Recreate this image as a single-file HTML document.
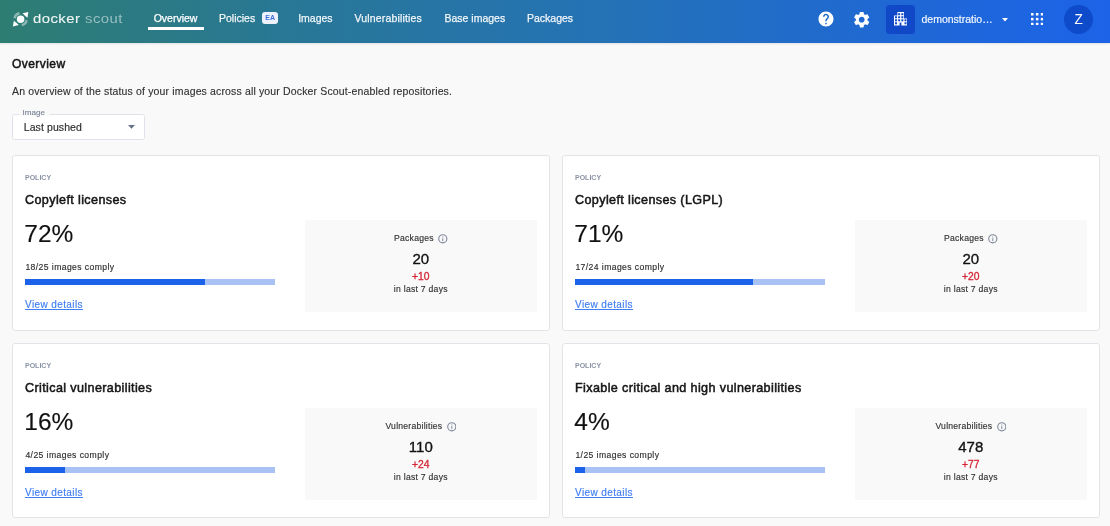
<!DOCTYPE html>
<html><head><meta charset="utf-8">
<style>
*{box-sizing:border-box;margin:0;padding:0}
html,body{width:1110px;height:526px;overflow:hidden;background:#f9f9f9;font-family:"Liberation Sans",sans-serif}
.a{position:absolute;line-height:1;white-space:nowrap}
#hdr{position:absolute;left:0;top:0;width:1110px;height:43px;background:linear-gradient(90deg,#2e7d72 0%,#287797 27%,#2572b5 54%,#1f68d5 81%,#1c63e8 100%);box-shadow:0 1px 2px rgba(0,0,0,.1)}
.nav{color:rgba(255,255,255,.9);font-size:10.5px;top:12.5px;-webkit-text-stroke:.25px rgba(255,255,255,.9)}
.card{position:absolute;width:537.5px;height:174.5px;background:#fff;border:1px solid #e3e4e9;border-radius:3px}
.card .pol{left:12px;top:17.9px;font-size:7px;font-weight:700;color:#8a93a6}
.card .ttl{left:12px;top:37.5px;font-size:12.6px;color:#151515;letter-spacing:.37px;-webkit-text-stroke:.5px #151515}
.card .pct{left:11.3px;top:65.4px;font-size:24.5px;color:#111;-webkit-text-stroke:.15px #111}
.card .cmp{left:12.4px;top:106.5px;font-size:8.6px;color:#2e2e2e;letter-spacing:.42px;-webkit-text-stroke:.15px #2e2e2e}
.card .bar{position:absolute;left:12px;top:122.5px;width:250px;height:6px;background:#a8c2f6}
.card .bar i{position:absolute;left:0;top:0;height:6px;background:#1c61ea}
.card .lnk{left:12px;top:143.5px;font-size:10px;color:#3f7ff3;letter-spacing:.4px;text-decoration:underline;text-decoration-thickness:.8px;text-underline-offset:1px;-webkit-text-stroke:.15px #3f7ff3}
.card .pnl{position:absolute;left:292px;top:63.5px;width:231.6px;height:92px;background:#f9f9f9}
.pnl .a{width:100%;text-align:center}
.pnl .lbl{top:13.8px;font-size:8.6px;color:#333;letter-spacing:.25px;-webkit-text-stroke:.15px #333}
.pnl .num{top:31.3px;font-size:15px;color:#111;-webkit-text-stroke:.35px #111}
.pnl .dlt{top:52.3px;font-size:10.3px;color:#d52536;-webkit-text-stroke:.3px #d52536}
.pnl .lst{top:65.5px;font-size:8.6px;color:#333;letter-spacing:.27px;-webkit-text-stroke:.15px #333}
</style></head><body><div style="position:absolute;left:0;top:0;width:1110px;height:526px;will-change:transform">
<div id="hdr">
  <svg class="a" style="left:13px;top:12px;overflow:visible" width="15" height="15" viewBox="0 0 15 15">
    <circle cx="7.6" cy="7.15" r="3.75" fill="#fff"/>
    <path d="M15.3 -0.1 L14.5 5.7 Q11.7 3.9 9.5 1.35 Z" fill="#fff"/>
    <path d="M-0.1 14.5 L0.8 8.7 Q3.6 10.5 5.7 13.0 Z" fill="#fff"/>
    <path d="M0.4 6.0 A7.3 7.3 0 0 1 6.2 -0.05 L6.7 2.4 A4.85 4.85 0 0 0 2.9 6.4Z" fill="rgba(255,255,255,.45)"/>
    <path d="M14.8 8.3 A7.3 7.3 0 0 1 9.0 14.35 L8.5 11.9 A4.85 4.85 0 0 0 12.3 7.9Z" fill="rgba(255,255,255,.45)"/>
  </svg>
  <span class="a" style="left:33px;top:12.2px;font-size:13.3px;color:#f2f7f5;letter-spacing:.4px;transform:scaleX(1.12);transform-origin:0 0;-webkit-text-stroke:.1px #f2f7f5">docker</span>
  <span class="a" style="left:84.5px;top:12.2px;font-size:13.3px;color:rgba(255,255,255,.5);letter-spacing:.4px;transform:scaleX(1.12);transform-origin:0 0">scout</span>

  <span class="a nav" style="left:153.7px;color:#fff;-webkit-text-stroke:.25px #fff">Overview</span>
  <div class="a" style="left:148px;top:27px;width:56px;height:3px;background:#fff"></div>
  <span class="a nav" style="left:219px">Policies</span>
  <span class="a" style="left:262.2px;top:11.9px;width:16px;height:11.8px;border-radius:3px;background:#edf2fc;color:#3d6fe0;font-size:7px;font-weight:700;text-align:center;line-height:11.4px">EA</span>
  <span class="a nav" style="left:298.2px">Images</span>
  <span class="a nav" style="left:354.5px;letter-spacing:.17px">Vulnerabilities</span>
  <span class="a nav" style="left:444.5px">Base images</span>
  <span class="a nav" style="left:527px">Packages</span>

  <!-- help -->
  <svg class="a" style="left:817.4px;top:10.3px" width="18" height="18" viewBox="0 0 24 24"><path fill="#fff" d="M12 2C6.48 2 2 6.48 2 12s4.48 10 10 10 10-4.48 10-10S17.52 2 12 2zm1 17h-2v-2h2v2zm2.07-7.75l-.9.92C13.45 12.9 13 13.5 13 15h-2v-.5c0-1.1.45-2.1 1.17-2.83l1.24-1.26c.37-.36.59-.86.59-1.41 0-1.1-.9-2-2-2s-2 .9-2 2H8c0-2.21 1.79-4 4-4s4 1.79 4 4c0 .88-.36 1.68-.93 2.25z"/></svg>
  <!-- gear -->
  <svg class="a" style="left:852.1px;top:9.7px" width="19.4" height="19.4" viewBox="0 0 24 24"><path fill="#fff" d="M19.14 12.94c.04-.3.06-.61.06-.94 0-.32-.02-.64-.07-.94l2.03-1.58c.18-.14.23-.41.12-.61l-1.92-3.32c-.12-.22-.37-.29-.59-.22l-2.39.96c-.5-.38-1.03-.7-1.62-.94l-.36-2.54c-.04-.24-.24-.41-.48-.41h-3.84c-.24 0-.43.17-.47.41l-.36 2.54c-.59.24-1.13.57-1.62.94l-2.39-.96c-.22-.08-.47 0-.59.22L2.74 8.87c-.12.21-.08.47.12.61l2.03 1.58c-.05.3-.09.63-.09.94s.02.64.07.94l-2.03 1.58c-.18.14-.23.41-.12.61l1.92 3.32c.12.22.37.29.59.22l2.39-.96c.5.38 1.03.7 1.62.94l.36 2.54c.05.24.24.41.48.41h3.84c.24 0 .44-.17.47-.41l.36-2.54c.59-.24 1.13-.56 1.62-.94l2.39.96c.22.08.47 0 .59-.22l1.92-3.32c.12-.22.07-.47-.12-.61l-2.01-1.58zM12 15.6c-1.98 0-3.6-1.62-3.6-3.6s1.62-3.6 3.6-3.6 3.6 1.62 3.6 3.6-1.62 3.6-3.6 3.6z"/></svg>
  <!-- org -->
  <div class="a" style="left:886px;top:4.6px;width:29.4px;height:29.2px;border-radius:3.5px;background:#1148c8"></div>
  <svg class="a" style="left:893.6px;top:12.4px" width="13.6" height="13.6" viewBox="0 0 13.6 13.6"><path fill="#fff" d="M3.4 0H10V6.4H13.6V13.6H7.4V10.4H5.6V13.6H0V3.4H3.4Z"/><g fill="#1148c8"><rect x="4.15" y="1.20" width="2.0" height="2.0"/><rect x="7.35" y="1.20" width="2.0" height="2.0"/><rect x="1.00" y="4.25" width="2.0" height="2.0"/><rect x="4.15" y="4.25" width="2.0" height="2.0"/><rect x="7.35" y="4.25" width="2.0" height="2.0"/><rect x="1.00" y="7.30" width="2.0" height="2.0"/><rect x="4.15" y="7.30" width="2.0" height="2.0"/><rect x="7.35" y="7.30" width="2.0" height="2.0"/><rect x="10.50" y="7.30" width="2.0" height="2.0"/><rect x="1.00" y="10.30" width="2.0" height="2.0"/><rect x="10.50" y="10.30" width="2.0" height="2.0"/></g></svg>
  <span class="a" style="left:921.5px;top:14px;font-size:10.5px;color:rgba(255,255,255,.92);-webkit-text-stroke:.2px rgba(255,255,255,.92)">demonstratio…</span>
  <svg class="a" style="left:1002px;top:18px" width="6" height="4" viewBox="0 0 6 4"><path d="M0 0H6L3 3.5Z" fill="#fff"/></svg>
  <!-- apps grid -->
  <svg class="a" style="left:1030.9px;top:12.8px" width="12.3" height="12.3" viewBox="0 0 12.2 12.2" fill="#fff"><rect x="0.00" y="0.00" width="2.5" height="2.5"/><rect x="4.85" y="0.00" width="2.5" height="2.5"/><rect x="9.70" y="0.00" width="2.5" height="2.5"/><rect x="0.00" y="4.85" width="2.5" height="2.5"/><rect x="4.85" y="4.85" width="2.5" height="2.5"/><rect x="9.70" y="4.85" width="2.5" height="2.5"/><rect x="0.00" y="9.70" width="2.5" height="2.5"/><rect x="4.85" y="9.70" width="2.5" height="2.5"/><rect x="9.70" y="9.70" width="2.5" height="2.5"/></svg>
  <div class="a" style="left:1064.2px;top:4.7px;width:29.2px;height:29px;border-radius:50%;background:#0e4bca"></div><span class="a" style="left:1064.2px;top:10.9px;width:29.2px;text-align:center;font-size:15.5px;color:#fff;transform:scaleX(.88)">Z</span>
</div>

<span class="a" style="left:12px;top:57.8px;font-size:12px;color:#151515;letter-spacing:.45px;-webkit-text-stroke:.5px #151515">Overview</span>
<span class="a" style="left:12px;top:86.1px;font-size:10.5px;color:#2f2f2f;letter-spacing:.148px;-webkit-text-stroke:.12px #2f2f2f">An overview of the status of your images across all your Docker Scout-enabled repositories.</span>

<div class="a" style="left:12px;top:114px;width:133px;height:25.5px;border:1px solid #dfe2e9;border-radius:2.5px;background:#fff"></div>
<div class="a" style="left:19.2px;top:112px;width:31px;height:4px;background:#f9f9f9"></div>
<span class="a" style="left:22.6px;top:108.5px;font-size:8px;color:#7e879a;-webkit-text-stroke:.15px #7e879a">Image</span>
<span class="a" style="left:23.7px;top:122.3px;font-size:10.5px;color:#2b2b2b;letter-spacing:.1px;-webkit-text-stroke:.15px #2b2b2b">Last pushed</span>
<svg class="a" style="left:128px;top:125.4px" width="7" height="4" viewBox="0 0 7 4"><path d="M0 0H7L3.5 3.7Z" fill="#677287"/></svg>

<!-- card 1 -->
<div class="card" style="left:12px;top:155.4px;height:176px">
  <span class="a pol">POLICY</span>
  <span class="a ttl">Copyleft licenses</span>
  <span class="a pct">72%</span>
  <span class="a cmp">18/25 images comply</span>
  <div class="bar"><i style="width:180px"></i></div>
  <span class="a lnk">View details</span>
  <div class="pnl">
    <span class="a lbl">Packages <svg width="9.6" height="9.6" viewBox="0 0 10 10" style="vertical-align:-3.1px;margin-left:1.5px;-webkit-text-stroke:0"><circle cx="5" cy="5" r="4.25" fill="none" stroke="#7f889b" stroke-width="1.15"/><rect x="4.5" y="4.3" width="1" height="3.1" fill="#7f889b"/><rect x="4.5" y="2.6" width="1" height="1" fill="#7f889b"/></svg></span>
    <span class="a num">20</span>
    <span class="a dlt">+10</span>
    <span class="a lst">in last 7 days</span>
  </div>
</div>

<!-- card 2 -->
<div class="card" style="left:562px;top:155.4px;height:176px">
  <span class="a pol">POLICY</span>
  <span class="a ttl">Copyleft licenses (LGPL)</span>
  <span class="a pct">71%</span>
  <span class="a cmp">17/24 images comply</span>
  <div class="bar"><i style="width:177.5px"></i></div>
  <span class="a lnk">View details</span>
  <div class="pnl">
    <span class="a lbl">Packages <svg width="9.6" height="9.6" viewBox="0 0 10 10" style="vertical-align:-3.1px;margin-left:1.5px;-webkit-text-stroke:0"><circle cx="5" cy="5" r="4.25" fill="none" stroke="#7f889b" stroke-width="1.15"/><rect x="4.5" y="4.3" width="1" height="3.1" fill="#7f889b"/><rect x="4.5" y="2.6" width="1" height="1" fill="#7f889b"/></svg></span>
    <span class="a num">20</span>
    <span class="a dlt">+20</span>
    <span class="a lst">in last 7 days</span>
  </div>
</div>

<!-- card 3 -->
<div class="card" style="left:12px;top:343.3px">
  <span class="a pol">POLICY</span>
  <span class="a ttl">Critical vulnerabilities</span>
  <span class="a pct">16%</span>
  <span class="a cmp">4/25 images comply</span>
  <div class="bar"><i style="width:40px"></i></div>
  <span class="a lnk">View details</span>
  <div class="pnl">
    <span class="a lbl">Vulnerabilities <svg width="9.6" height="9.6" viewBox="0 0 10 10" style="vertical-align:-3.1px;margin-left:1.5px;-webkit-text-stroke:0"><circle cx="5" cy="5" r="4.25" fill="none" stroke="#7f889b" stroke-width="1.15"/><rect x="4.5" y="4.3" width="1" height="3.1" fill="#7f889b"/><rect x="4.5" y="2.6" width="1" height="1" fill="#7f889b"/></svg></span>
    <span class="a num">110</span>
    <span class="a dlt">+24</span>
    <span class="a lst">in last 7 days</span>
  </div>
</div>

<!-- card 4 -->
<div class="card" style="left:562px;top:343.3px">
  <span class="a pol">POLICY</span>
  <span class="a ttl">Fixable critical and high vulnerabilities</span>
  <span class="a pct">4%</span>
  <span class="a cmp">1/25 images comply</span>
  <div class="bar"><i style="width:10px"></i></div>
  <span class="a lnk">View details</span>
  <div class="pnl">
    <span class="a lbl">Vulnerabilities <svg width="9.6" height="9.6" viewBox="0 0 10 10" style="vertical-align:-3.1px;margin-left:1.5px;-webkit-text-stroke:0"><circle cx="5" cy="5" r="4.25" fill="none" stroke="#7f889b" stroke-width="1.15"/><rect x="4.5" y="4.3" width="1" height="3.1" fill="#7f889b"/><rect x="4.5" y="2.6" width="1" height="1" fill="#7f889b"/></svg></span>
    <span class="a num">478</span>
    <span class="a dlt">+77</span>
    <span class="a lst">in last 7 days</span>
  </div>
</div>
</div></body></html>
